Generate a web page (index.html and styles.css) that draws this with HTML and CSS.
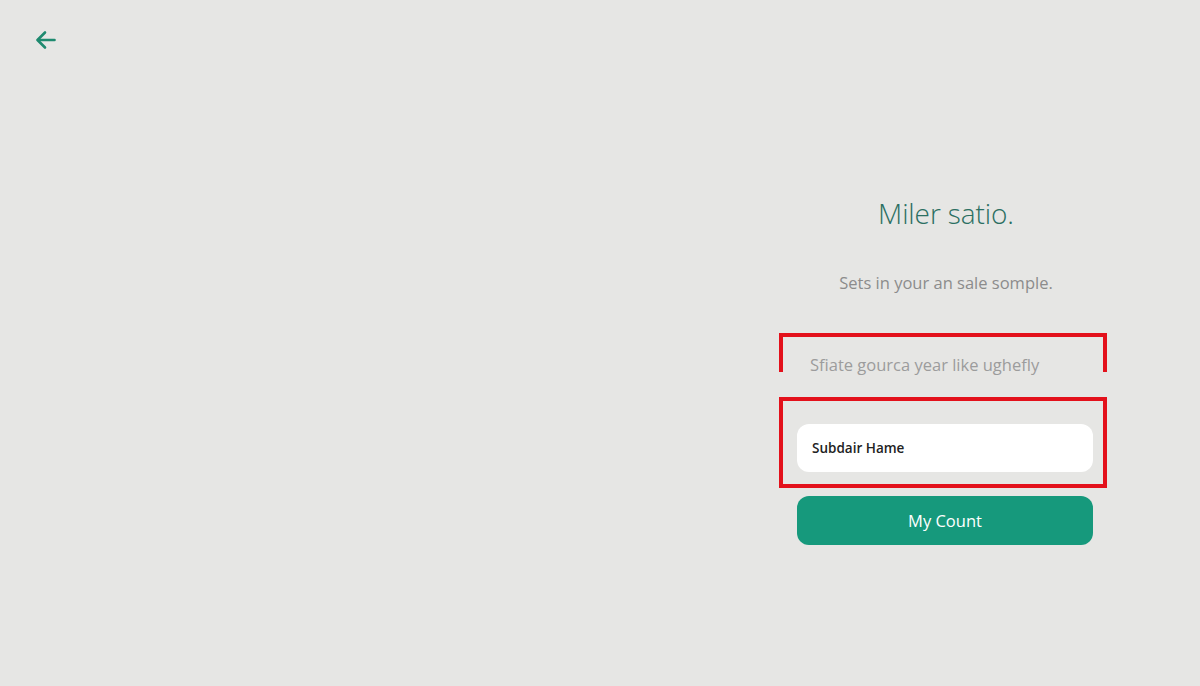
FILE: index.html
```html
<!DOCTYPE html>
<html lang="en">
<head>
<meta charset="utf-8">
<title>Miler satio.</title>
<link rel="stylesheet" href="styles.css">
</head>
<body>
<div class="page">
  <header class="topbar">
    <button class="back" aria-label="Back">
      <svg width="22" height="22" viewBox="0 0 22 22" fill="none" stroke="#1f8a6f" stroke-width="2.6" stroke-linecap="round" stroke-linejoin="round">
        <path d="M19.5 11H3"/>
        <path d="M10 3.5L2.5 11L10 18.5"/>
      </svg>
    </button>
  </header>
  <main class="content">
    <section class="panel">
      <h1 class="title">Miler satio.</h1>
      <p class="subtitle">Sets in your an sale somple.</p>
      <div class="hint-box">
        <p class="hint">Sfiate gourca year like ughefly</p>
      </div>
      <div class="field-box">
        <div class="field">Subdair Hame</div>
      </div>
      <button class="primary">My Count</button>
    </section>
  </main>
</div>
</body>
</html>
```

FILE: styles.css
```css
* { box-sizing: border-box; }
html, body { margin: 0; padding: 0; }
body {
  background: #e6e6e4;
  font-family: "Open Sans", "Noto Sans", sans-serif;
  width: 1200px;
  height: 686px;
  overflow: hidden;
}
.page {
  display: flex;
  flex-direction: column;
  height: 100%;
}
.topbar {
  padding: 28px 0 0 34px;
  height: 60px;
}
.back {
  background: none;
  border: none;
  padding: 0;
  width: 24px;
  height: 24px;
  display: flex;
  align-items: center;
  justify-content: center;
  cursor: pointer;
}
.content {
  display: flex;
  justify-content: flex-end;
  padding-right: 93px;
}
.panel {
  width: 328px;
  margin-top: 135px;
  display: flex;
  flex-direction: column;
}
.title {
  margin: 0;
  text-align: center;
  font-weight: 300;
  font-size: 28px;
  line-height: 36px;
  color: #2b6f62;
  letter-spacing: -0.1px;
  padding-left: 6px;
}
.subtitle {
  margin: 40px 0 0;
  text-align: center;
  font-size: 16.5px;
  line-height: 24px;
  color: #8c8c8c;
  font-weight: 400;
  padding-left: 6px;
}
.hint-box {
  margin-top: 38px;
  height: 39px;
  border-top: 4px solid #e3111b;
  border-left: 4px solid #e3111b;
  border-right: 4px solid #e3111b;
}
.hint {
  margin: 0;
  padding: 17px 0 0 27px;
  font-size: 16.5px;
  line-height: 22px;
  color: #9c9c9c;
  font-weight: 400;
  white-space: nowrap;
}
.field-box {
  margin-top: 25px;
  border: 4px solid #e3111b;
  padding: 23px 10px 12px 14px;
}
.field {
  height: 48px;
  background: #ffffff;
  border-radius: 12px;
  padding-left: 15px;
  display: flex;
  align-items: center;
  font-size: 13.5px;
  font-weight: 600;
  color: #222222;
}
.primary {
  margin: 8px 0 0 18px;
  width: 296px;
  height: 49px;
  border: none;
  border-radius: 12px;
  background: #16997c;
  color: #ffffff;
  font-family: "Open Sans", "Noto Sans", sans-serif;
  font-size: 16.5px;
  cursor: pointer;
}
```
